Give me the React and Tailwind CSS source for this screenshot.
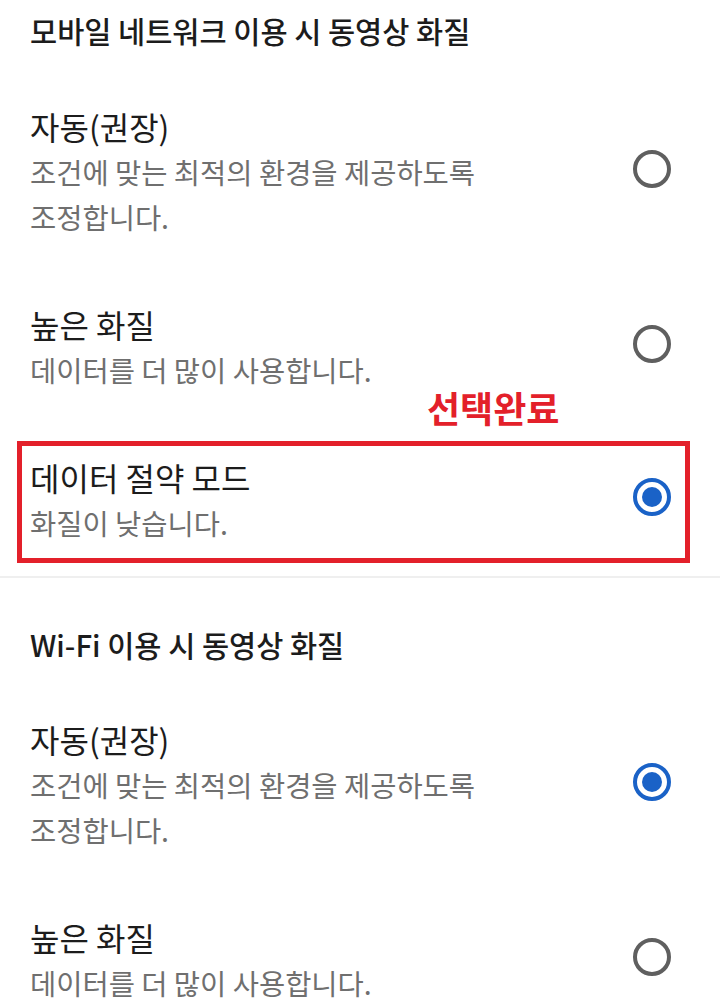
const mobileOptions = [
  { title: "자동(권장)", desc: "조건에 맞는 최적의 환경을 제공하도록 조정합니다.", checked: false },
  { title: "높은 화질", desc: "데이터를 더 많이 사용합니다.", checked: false },
  { title: "데이터 절약 모드", desc: "화질이 낮습니다.", checked: true, marked: true },
];

const wifiOptions = [
  { title: "자동(권장)", desc: "조건에 맞는 최적의 환경을 제공하도록 조정합니다.", checked: true },
  { title: "높은 화질", desc: "데이터를 더 많이 사용합니다.", checked: false },
];

function Radio({ checked }) {
  if (checked) {
    return (
      <div className="mb-[5px] flex h-[38px] w-[38px] shrink-0 items-center justify-center rounded-full border-4 border-[#1a62c7]">
        <div className="h-[20px] w-[20px] rounded-full bg-[#1a62c7]" />
      </div>
    );
  }
  return <div className="mb-[5px] h-[38px] w-[38px] shrink-0 rounded-full border-4 border-[#5f5f5f]" />;
}

function OptionRow({ option }) {
  return (
    <div className="relative flex items-center justify-between py-[31px] pl-[30px] pr-[49px]">
      <div className="w-[510px] break-keep">
        <div className="text-[32px] leading-[46px] text-[#1c1c1c]">{option.title}</div>
        <div className="text-[28.5px] leading-[45px] text-[#6f6f6f]">{option.desc}</div>
      </div>
      <Radio checked={option.checked} />

      {/* annotation drawn over the screenshot */}
      {option.marked && (
        <>
          <div className="pointer-events-none absolute -top-[36px] left-[427px] text-[36px] font-bold leading-[40px] text-[#e3202a]">
            선택완료
          </div>
          <div className="pointer-events-none absolute bottom-[13px] left-[17px] right-[30px] top-[18px] border-[5px] border-[#e3202a]" />
        </>
      )}
    </div>
  );
}

export default function App() {
  return (
    <div className="min-h-[1006px] w-[720px] overflow-hidden bg-white font-['Noto_Sans_CJK_KR','Noto_Sans',sans-serif]">
      <div className="pb-[22px] pl-[30px] pt-[10px] text-[29.5px] font-medium leading-[40px] text-[#1c1c1c]">
        모바일 네트워크 이용 시 동영상 화질
      </div>
      {mobileOptions.map((o) => (
        <OptionRow key={o.title} option={o} />
      ))}

      <div className="h-[2px] bg-[#efefef]" />

      <div className="pb-[21px] pl-[30px] pt-[46px] text-[29.5px] font-medium leading-[40px] text-[#1c1c1c]">
        Wi-Fi 이용 시 동영상 화질
      </div>
      {wifiOptions.map((o) => (
        <OptionRow key={o.title} option={o} />
      ))}
    </div>
  );
}
